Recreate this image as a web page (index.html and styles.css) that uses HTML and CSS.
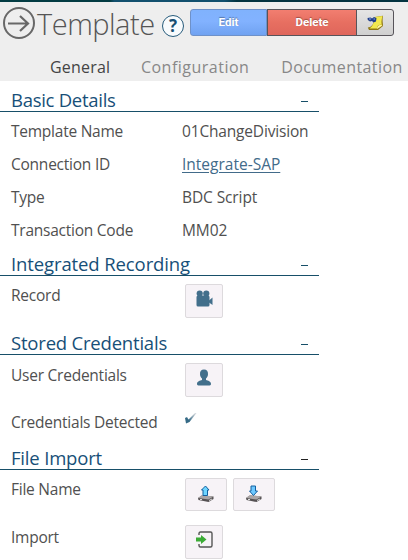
FILE: index.html
```
<!DOCTYPE html>
<html lang="en">
<head>
<meta charset="utf-8">
<title>Template</title>
<link rel="stylesheet" href="styles.css">
</head>
<body>
<header class="header">
  <div class="topbar">
    <svg class="back" width="34" height="34" viewBox="0 0 34 34" fill="none" stroke="#686868" stroke-width="2"><circle cx="17" cy="17" r="15"/><path stroke-width="2.2" d="M6 17.500H26M18 10L26 17.500L18 25"/></svg>
    <h1 class="page-title">Template</h1>
    <span class="help">?</span>
    <div class="actions">
      <button class="btn edit">Edit</button><button class="btn delete">Delete</button><button class="btn note" aria-label="Note"><svg width="17" height="16" viewBox="0 0 17 16"><path d="M8 2L16 .8C15 5 16 9 16 11L11 15H2L.8 12.500C5 12 7 9 8 2Z" fill="#8e7613"/><path d="M7.500 2L15.500 1C14.500 5 14 8 15 10C12 9 10 11 10 13.500H2.500C6 11 7 8 7.500 2Z" fill="#f2e94f"/><path d="M10 14C10 11 12 9 15.500 10.500Z" fill="#fff79b"/><path d="M.5 3L3.500 2.500L5 3.500L7 2L9.500 3L9 6.500L6.500 7.500L5 6L3 6.500L.8 5Z" fill="#203f8a"/><path d="M2 4h2M6.500 4h1.500" stroke="#8ba5df"/></svg></button>
    </div>
  </div>
  <nav class="tabs"><span class="tab active">General</span><span class="tab config">Configuration</span><span class="tab docs">Documentation</span></nav>
</header>
<main>
  <section>
    <h2 class="heading first"><span class="h-basic">Basic Details</span><i class="dash"></i></h2>
    <div class="fields">
      <div class="row"><span class="label">Template Name</span><span class="division">01ChangeDivision</span></div>
      <div class="row"><span class="label">Connection ID</span><a class="link">Integrate-SAP</a></div>
      <div class="row"><span class="label">Type</span><span>BDC Script</span></div>
      <div class="row"><span class="label">Transaction Code</span><span>MM02</span></div>
    </div>
  </section>
  <section>
    <h2 class="heading"><span class="h-record">Integrated Recording</span><i class="dash"></i></h2>
    <div class="icon-row record"><span class="label">Record</span><button class="tile"><svg width="17" height="17" viewBox="0 0 17 17" fill="#426f8b"><circle cx="3.700" cy="3.500" r="3.100"/><circle cx="10.300" cy="3.500" r="3.100"/><rect x=".5" y="5.500" width="13" height="11" rx="1.500"/><path d="M13 10.500L16.500 7.500V15L13 12.500Z"/></svg></button></div>
  </section>
  <section>
    <h2 class="heading"><span class="h-stored">Stored Credentials</span><i class="dash"></i></h2>
    <div class="icon-row user"><span class="label">User Credentials</span><button class="tile"><svg width="16" height="17" viewBox="0 0 16 17" fill="#426f8b"><path d="M8 .5C5.200.5 3.800 2.500 4 5.200C4.100 7.200 5 8.700 6 9.400V11C4 11.700 1 12.200 1 15C1 16 2 16.500 3.500 16.500H12.500C14 16.500 15 16 15 15C15 12.200 12 11.700 10 11V9.400C11 8.700 11.900 7.200 12 5.200C12.200 2.500 10.800.5 8 .5Z"/></svg></button></div>
    <div class="icon-row detected"><span class="label">Credentials Detected</span><svg class="check" width="12" height="11" viewBox="0 0 12 11"><defs><linearGradient id="tick" x1="0" y1="1" x2="1" y2="0"><stop offset=".3" stop-color="#356a86"/><stop offset=".85" stop-color="#c3ccd2"/></linearGradient></defs><path d="M0 5L2 4L3.500 6.500L9.500.5L11.500 0L4.500 9L1 10.500Z" fill="url(#tick)"/></svg></div>
  </section>
  <section>
    <h2 class="heading"><span class="h-file">File Import</span><i class="dash dark"></i></h2>
    <div class="icon-row file"><span class="label">File Name</span>
      <button class="tile wide"><svg width="18" height="18" viewBox="0 0 18 18"><path d="M1 13L5 10.500L16.500 11.500V14L11.500 17L1.500 15Z" fill="#555153"/><path d="M1 13L5 10L16.500 11.500L11.500 14.500Z" fill="#aaa5a6"/><path d="M3 14.500h2M12 15.500l3-1.500" stroke="#ddd"/><path d="M8.500 1L12 5H10.500V10.500H6V5H4.500Z" fill="#6ed5ff" stroke="#1260a0"/></svg></button>
      <button class="tile wide"><svg width="18" height="18" viewBox="0 0 18 18"><path d="M1 13L5 10.500L16.500 11.500V14L11.500 17L1.500 15Z" fill="#555153"/><path d="M1 13L5 10L16.500 11.500L11.500 14.500Z" fill="#aaa5a6"/><path d="M3 14.500h2M12 15.500l3-1.500" stroke="#ddd"/><path d="M6 1H10.500V6H12.500L8.500 10.500L4.500 6H6Z" fill="#6ec8ff" stroke="#1260a0"/></svg></button>
    </div>
    <div class="icon-row import"><span class="label">Import</span><button class="tile"><svg width="17" height="17" viewBox="0 0 17 17"><path d="M3 4V2.500Q3 1 4.500 1H14.500Q16 1 16 2.500V14.500Q16 16 14.500 16H4.500Q3 16 3 14.500V13" fill="none" stroke="#555" stroke-width="1.400"/><path d="M0 6.500H5V4L10.500 8.500L5 13V10.500H0Z" fill="#3cac36"/></svg></button></div>
  </section>
</main>
</body>
</html>
```
FILE: styles.css
```
* { box-sizing: border-box; }
body { margin: 0; background: #fff; color: #505050; font: 15.500px/20px "Open Sans", "Noto Sans", sans-serif; overflow: hidden; }
button { font: inherit; padding: 0; margin: 0; }
.header { height: 81px; background: #eee; overflow: hidden; }
.header::before { content: ""; display: block; height: 2px; background: linear-gradient(90deg, #033c43 0 27%, #12506e 28% 55%, #033340 58%); }
.topbar { height: 42px; display: flex; padding: 4px 0 0 2px; }
.back { flex: none; }
.page-title { margin: -2px 0 0 1px; width: 125px; font-size: 29px; line-height: 40px; font-weight: 300; letter-spacing: -.5px; color: #555; }
.help { width: 22px; height: 22px; margin-top: 9px; border: 1.500px solid #275b7b; border-radius: 50%; background: #f8fbfd; color: #184f72; font-size: 17px; line-height: 20px; font-weight: 700; text-align: center; flex: none; }
.actions { display: flex; margin: 3px 0 0 6px; height: 27px; }
.btn { height: 27px; border: 1px solid #57545a; font: 700 11.500px/23px Roboto, "Liberation Sans", sans-serif; color: #fff; text-shadow: 0 -1px 1px #0005; }
.edit { width: 77px; border-color: #6e91c9; border-radius: 3px 0 0 3px; background: linear-gradient(#80b2fd, #82b2ff 45%, #70a2f1); }
.delete { width: 90px; background: linear-gradient(#f27e70, #e76f61 50%, #df665b); }
.note { width: 38px; margin-left: -1px; border-radius: 0 3px 3px 0; background: linear-gradient(#e5e5e5, #cfcfcf); display: flex; align-items: center; justify-content: center; }
.tabs { display: flex; padding-left: 50px; font-size: 16px; line-height: 24px; margin-top: 11px; color: #888; white-space: nowrap; }
.tab { width: 91px; letter-spacing: .2px; }
.active { color: #444; }
.config { width: 140.500px; letter-spacing: .5px; }
.docs { width: 127px; letter-spacing: .42px; }
main { width: 319px; }
.heading { margin: 0; height: 28px; border-bottom: 1px solid #174f69; padding: 3px 11px 0; display: flex; justify-content: space-between; font-size: 18.500px; font-weight: 400; line-height: 25px; color: #174f78; white-space: nowrap; }
.first { height: 31px; padding-top: 6px; }
.h-basic { letter-spacing: -.28px; }
.h-record { letter-spacing: -.11px; }
.h-stored { letter-spacing: -.2px; }
.h-file { letter-spacing: -.18px; }
.dash { width: 7px; height: 1px; background: #174f69; margin-top: 14px; }
.dark { background: #222; }
.fields { height: 136px; padding-top: 2px; }
.row { height: 33.200px; padding-left: 11px; display: flex; align-items: center; white-space: nowrap; letter-spacing: -.1px; }
.label { width: 171px; flex: none; letter-spacing: -.24px; }
.division { letter-spacing: -.17px; }
.link { color: #426b8a; letter-spacing: 0; text-decoration: underline; text-underline-offset: 2px; }
.icon-row { display: flex; padding: 8px 0 0 11px; align-items: flex-start; white-space: nowrap; }
.icon-row .label { width: 174px; margin-top: 1px; }
.tile { width: 38px; height: 34px; flex: none; border: 1px solid #dddadd; border-radius: 2px; background: #f7f3f7; display: flex; align-items: center; justify-content: center; padding-bottom: 5px; }
.tile.wide { width: 42px; height: 33px; margin-right: 6px; padding-bottom: 1px; }
.record { height: 51px; }
.user { height: 47px; }
.icon-row.user .label { margin-top: 2px; }
.detected { height: 40px; }
.icon-row.detected .label { margin-top: 2px; }
.detected .check { margin-top: 3px; }
.file { height: 46px; }
.import { height: 44px; padding-top: 9px; }
.icon-row.import .label { margin-top: 2px; }
```
